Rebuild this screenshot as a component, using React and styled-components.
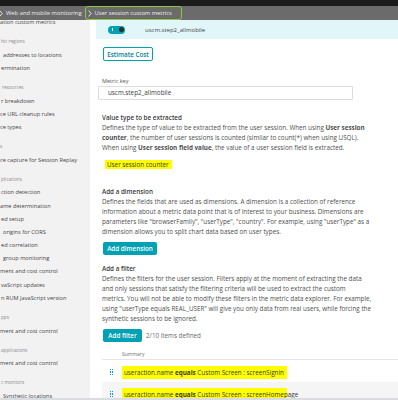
import React from 'react';
import styled, { createGlobalStyle } from 'styled-components';

const GlobalStyle = createGlobalStyle`
  html, body {
    margin: 0;
    padding: 0;
    background: #fff;
  }
  body {
    font-family: "Open Sans", "DejaVu Sans", sans-serif;
    overflow: hidden;
  }
  * {
    box-sizing: border-box;
  }
`;

const Page = styled.div`
  width: 398px;
  height: 400px;
  display: flex;
  flex-direction: column;
  overflow: hidden;
  border-bottom: 2px solid #d9dde1;
`;

const TopBar = styled.div`
  height: 6px;
  flex-shrink: 0;
  background: #1b1b1b;
`;

const Breadcrumb = styled.div`
  height: 14px;
  flex-shrink: 0;
  display: flex;
  align-items: center;
  background: #6b6b6b;
  color: #ededed;
  font-size: 5.8px;
  white-space: nowrap;
`;

const Crumb = styled.span`
  display: flex;
  align-items: center;
  gap: 3px;
  margin-left: ${p => p.offset || 0}px;
`;

const ActiveCrumb = styled.span`
  display: flex;
  align-items: center;
  gap: 3px;
  height: 14px;
  margin-left: 3px;
  padding: 0 9px 0 2px;
  border: 1.5px solid #8dc63f;
  border-radius: 3px;
  color: #f2f2f2;
`;

const Body = styled.div`
  flex: 1;
  min-height: 0;
  display: flex;
`;

const Sidebar = styled.nav`
  width: 90px;
  flex-shrink: 0;
  overflow: hidden;
  background: #f2f2f2;
  white-space: nowrap;
`;

const SideList = styled.div`
  margin-top: -4px;
`;

const SideItem = styled.div`
  height: 13.2px;
  line-height: 13.2px;
  font-size: 5.65px;
  color: #454545;
  padding-left: ${p => p.pad || 0}px;
`;

const SideHeader = styled.div`
  height: 13.5px;
  line-height: 13.5px;
  margin-top: 6px;
  font-size: 4.7px;
  color: #8c8c8c;
  padding-left: ${p => p.pad || 0}px;
`;

const Main = styled.main`
  flex: 1;
  min-width: 0;
  overflow: hidden;
  padding-left: 6px;
`;

const Band = styled.div`
  height: 19px;
  display: flex;
  align-items: center;
  padding-left: 12px;
  background: #e1f6f9;
  font-size: 6px;
  color: #454646;
`;

const Toggle = styled.span`
  position: relative;
  width: 17px;
  height: 8px;
  margin-right: 20px;
  border-radius: 4px;
  background: #00a1b2;

  &::before {
    content: '';
    position: absolute;
    left: 4px;
    top: 2.5px;
    width: 1px;
    height: 3px;
    background: #fff;
  }

  &::after {
    content: '';
    position: absolute;
    right: 1.5px;
    top: 1.5px;
    width: 5px;
    height: 5px;
    border-radius: 50%;
    background: #2d2d2d;
  }
`;

const Content = styled.div`
  padding-left: 6px;
  color: #4f4f4f;
  font-size: 6.3px;
`;

const OutlineButton = styled.button`
  display: block;
  margin: 8px 0 0 1px;
  width: 50px;
  height: 14px;
  padding: 0;
  border: 1px solid #00a1b2;
  border-radius: 2px;
  background: #fff;
  color: #00818e;
  font-family: inherit;
  font-size: 6.3px;
  font-weight: 600;
`;

const FillButton = styled.button`
  display: inline-block;
  width: ${p => p.w}px;
  height: 13px;
  padding: 0;
  margin-left: 1px;
  border: none;
  border-radius: 2px;
  background: #00a1b2;
  color: #fff;
  font-family: inherit;
  font-size: 6.3px;
  font-weight: 600;
`;

const Label = styled.div`
  margin-top: 15px;
  height: 10px;
  line-height: 10px;
  font-size: 5.5px;
  color: #555;
`;

const Input = styled.div`
  margin-left: -4px;
  width: 255px;
  height: 14px;
  line-height: 12px;
  padding-left: 9px;
  border: 1px solid #dcdcdc;
  border-radius: 1px;
  color: #3e3e3e;
  font-size: 6.3px;
`;

const Section = styled.section`
  margin-top: ${p => p.top}px;
  line-height: 10px;
  white-space: nowrap;
`;

const Heading = styled.div`
  font-weight: 600;
  color: #3a3a3a;
`;

const Highlight = styled.span`
  display: inline-block;
  background: #ffff00;
  color: #3a3a3a;
`;

const ValueTag = styled(Highlight)`
  margin: 7px 0 0 3px;
  height: 9px;
  line-height: 9px;
  padding: 0 3px 0 2px;
`;

const ActionRow = styled.div`
  display: flex;
  align-items: center;
  gap: 4px;
  margin-top: ${p => p.top}px;
  color: #6a6a6a;
`;

const Table = styled.div`
  margin-top: 7px;
`;

const TableHead = styled.div`
  height: 11px;
  line-height: 11px;
  padding-left: 20px;
  font-size: 5px;
  color: #707070;
  border-bottom: 1px solid #e6e6e6;
`;

const Row = styled.div`
  height: 22px;
  display: flex;
  align-items: center;
  padding: 2px 0 0 8px;
  background: ${p => (p.shaded ? '#f5f5f5' : '#fff')};
`;

const Handle = styled.span`
  display: grid;
  grid-template-columns: 1.2px 1.2px;
  grid-auto-rows: 1.2px;
  gap: 1px;
  width: 4px;
  margin-right: 8px;

  & > i {
    display: block;
    background: #00a1b2;
  }
`;

const Cell = styled(Highlight)`
  width: 165px;
  height: 13px;
  line-height: 13px;
  padding-left: 2px;
  white-space: nowrap;

  & b {
    font-weight: 700;
  }
`;

const Chevron = ({ color = '#ededed' }) => (
  <svg width="4" height="7" viewBox="0 0 4 7">
    <path d="M0.6 0.5 L3.2 3.5 L0.6 6.5" fill="none" stroke={color} strokeWidth="0.9" />
  </svg>
);

const DragHandle = () => (
  <Handle>
    {[0, 1, 2, 3, 4, 5].map(i => <i key={i} />)}
  </Handle>
);

const sideNav = [
  { t: 'ation custom metrics', pad: 0 },
  { h: 'hic regions', pad: 1 },
  { t: 'addresses to locations', pad: 3 },
  { t: 'ermination', pad: 1 },
  { h: 'resources', pad: 2 },
  { t: 'r breakdown', pad: 1 },
  { t: 'ce URL cleanup rules', pad: 0 },
  { t: 'ce types', pad: 0 },
  { h: 's', pad: 0 },
  { t: 'ce capture for Session Replay', pad: 0 },
  { h: 'plications', pad: 1 },
  { t: 'ction detection', pad: 1 },
  { t: 'ame determination', pad: 0 },
  { t: 'ed setup', pad: 1 },
  { t: 'origins for CORS', pad: 3 },
  { t: 'ed correlation', pad: 1 },
  { t: 'group monitoring', pad: 3 },
  { t: 'ment and cost control', pad: 0 },
  { t: 'vaScript updates', pad: 1 },
  { t: 'n RUM JavaScript version', pad: 1 },
  { h: 'pps', pad: 1 },
  { t: 'ment and cost control', pad: 0 },
  { h: 'applications', pad: 1 },
  { t: 'ment and cost control', pad: 0 },
  { h: 'c monitors', pad: 1 },
  { t: 'Synthetic locations', pad: 3 },
];

const filters = ['screenSignin', 'screenHomepage'];

export default function App() {
  return (
    <Page>
      <GlobalStyle />
      <TopBar />
      <Breadcrumb>
        <Crumb offset={-1}>
          <Chevron />
          Web and mobile monitoring
        </Crumb>
        <ActiveCrumb>
          <Chevron />
          User session custom metrics
        </ActiveCrumb>
      </Breadcrumb>
      <Body>
        <Sidebar>
          <SideList>
            {sideNav.map((item, i) =>
              item.h ? (
                <SideHeader key={i} pad={item.pad}>{item.h}</SideHeader>
              ) : (
                <SideItem key={i} pad={item.pad}>{item.t}</SideItem>
              )
            )}
          </SideList>
        </Sidebar>
        <Main>
          <Band>
            <Toggle />
            uscm.step2_allmobile
          </Band>
          <Content>
            <OutlineButton>Estimate Cost</OutlineButton>
            <Label>Metric key</Label>
            <Input>uscm.step2_allmobile</Input>

            <Section top={13}>
              <Heading>Value type to be extracted</Heading>
              Defines the type of value to be extracted from the user session. When using <b>User session</b>
              <br />
              <b>counter</b>, the number of user sessions is counted (similar to count(*) when using USQL).
              <br />
              When using <b>User session field value</b>, the value of a user session field is extracted.
              <br />
              <ValueTag>User session counter</ValueTag>
            </Section>

            <Section top={17}>
              <Heading>Add a dimension</Heading>
              Defines the fields that are used as dimensions. A dimension is a collection of reference
              <br />
              information about a metric data point that is of interest to your business. Dimensions are
              <br />
              parameters like "browserFamily", "userType", "country". For example, using "userType" as a
              <br />
              dimension allows you to split chart data based on user types.
              <ActionRow top={5}>
                <FillButton w={54}>Add dimension</FillButton>
              </ActionRow>
            </Section>

            <Section top={9}>
              <Heading>Add a filter</Heading>
              Defines the filters for the user session. Filters apply at the moment of extracting the data
              <br />
              and only sessions that satisfy the filtering criteria will be used to extract the custom
              <br />
              metrics. You will not be able to modify these filters in the metric data explorer. For example,
              <br />
              using "userType equals REAL_USER" will give you only data from real users, while forcing the
              <br />
              synthetic sessions to be ignored.
              <ActionRow top={5}>
                <FillButton w={39}>Add filter</FillButton>
                2/10 items defined
              </ActionRow>
            </Section>

            <Table>
              <TableHead>Summary</TableHead>
              {filters.map((f, i) => (
                <Row key={f} shaded={i % 2 === 1}>
                  <DragHandle />
                  <Cell>
                    useraction.name <b>equals</b> Custom Screen : {f}
                  </Cell>
                </Row>
              ))}
            </Table>
          </Content>
        </Main>
      </Body>
    </Page>
  );
}
